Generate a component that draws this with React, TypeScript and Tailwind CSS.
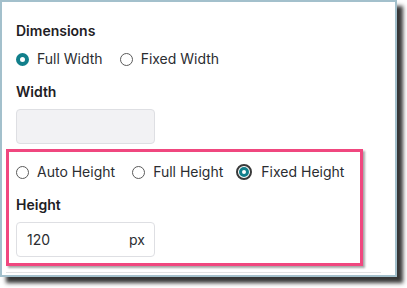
import React from "react";

function Radio({ state }: { state: "off" | "on" | "focus" }) {
  if (state === "on")
    return <span className="w-[13px] h-[13px] rounded-full border-[4px] border-[#117f8b] bg-white shrink-0" />;
  if (state === "focus")
    return (
      <span className="w-[16px] h-[16px] rounded-full border-[2px] border-[#3a3a3a] bg-white shrink-0 flex items-center justify-center">
        <span className="w-[10px] h-[10px] rounded-full border-[3px] border-[#117f8b] bg-white" />
      </span>
    );
  return <span className="w-[13px] h-[13px] rounded-full border border-[#5a5a5a] bg-white shrink-0" />;
}

function Option({ state, label, gap = "gap-[8px]" }: { state: "off" | "on" | "focus"; label: string; gap?: string }) {
  return (
    <div className={`flex items-center h-[20px] ${gap}`}>
      <Radio state={state} />
      <span className="text-[14px] text-[#2b2d31] leading-[20px]">{label}</span>
    </div>
  );
}

export default function App() {
  return (
    <div className="w-[407px] h-[288px] bg-white" style={{ fontFamily: "Inter, 'Noto Sans', sans-serif" }}>
      <div className="w-[397px] h-[277px] border-2 border-[#a3c0cc] bg-white shadow-[6px_6px_4px_rgba(20,20,20,0.85)] px-[14px] pt-[19px] flex flex-col">
        <div className="text-[14px] font-semibold leading-[20px] text-[#1e2024]">Dimensions</div>
        <div className="flex items-center gap-[17px] mt-[8px]">
          <Option state="on" label="Full Width" />
          <Option state="off" label="Fixed Width" />
        </div>
        <div className="text-[14px] font-semibold leading-[20px] text-[#1e2024] mt-[13px]">Width</div>
        <div className="w-[139px] h-[35px] mt-[7px] rounded-[4px] border border-[#dedfe3] bg-[#f2f2f4]" />
        <div className="ml-[-10px] w-[357px] mt-[5px] border-[3px] border-[#f0477f] pl-[7px] pt-[10px] pb-[6px] shadow-[2px_2px_2px_rgba(0,0,0,0.35)]">
          <div className="flex items-center gap-[17px]">
            <Option state="off" label="Auto Height" />
            <Option state="off" label="Full Height" />
            <div className="ml-[-4px]">
              <Option state="focus" label="Fixed Height" gap="gap-[9px]" />
            </div>
          </div>
          <div className="text-[14px] font-semibold leading-[20px] text-[#1e2024] mt-[13px]">Height</div>
          <div className="w-[139px] h-[35px] mt-[7px] rounded-[4px] border border-[#dedfe3] bg-white flex items-center justify-between pl-[10px] pr-[9px]">
            <span className="text-[14px] text-[#2b2d31]">120</span>
            <span className="text-[14px] text-[#2b2d31]">px</span>
          </div>
        </div>
        <div className="ml-[-10px] w-[375px] h-px bg-[#e2e2e4] mt-[6px]" />
      </div>
    </div>
  );
}
